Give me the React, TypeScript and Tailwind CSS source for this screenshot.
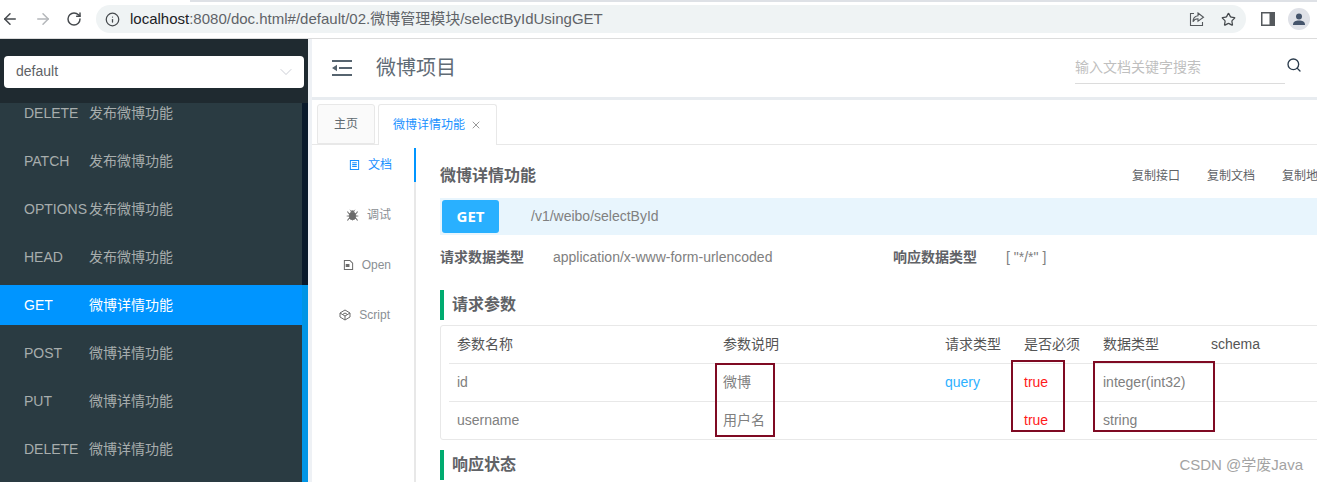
import { Search, ChevronDown, ArrowLeft, ArrowRight, RotateCw, Info, Star, Bug, X } from "lucide-react";

const FONT = "font-['Liberation_Sans','Noto_Sans_CJK_SC',sans-serif]";

const MENU = [
  { method: "DELETE", name: "发布微博功能" },
  { method: "PATCH", name: "发布微博功能" },
  { method: "OPTIONS", name: "发布微博功能" },
  { method: "HEAD", name: "发布微博功能" },
  { method: "GET", name: "微博详情功能", active: true },
  { method: "POST", name: "微博详情功能" },
  { method: "PUT", name: "微博详情功能" },
  { method: "DELETE", name: "微博详情功能" },
];

function BrowserBar() {
  return (
    <div className="relative flex h-[39px] shrink-0 items-center border-b border-[#dcdcdc] bg-white text-[#5f6368]">
      <div className="absolute right-0 top-0 h-[2px] w-[1127px] bg-[#dee1e6]" />
      <ArrowLeft className="ml-[1px] h-[18px] w-[18px] text-[#45494d]" strokeWidth={2} />
      <ArrowRight className="ml-[15px] h-[18px] w-[18px] text-[#b4b7ba]" strokeWidth={2} />
      <RotateCw className="ml-[14px] h-[16px] w-[16px] text-[#45494d]" strokeWidth={2.2} />
      <div className="ml-[14px] flex h-[28px] w-[1150px] items-center rounded-full bg-[#eff3f4] pl-[9px]">
        <Info className="h-[15px] w-[15px] text-[#45494d]" strokeWidth={2} />
        <span className="ml-[10px] text-[15px] text-[#5f6368]">
          <span className="text-[#202124]">localhost</span>:8080/doc.html#/default/02.微博管理模块/selectByIdUsingGET
        </span>
        <svg viewBox="0 0 16 16" className="ml-auto h-[16px] w-[16px] text-[#55595d]" fill="none" stroke="currentColor" strokeWidth="1.1">
          <path d="M5 2.5H1.5v12h12V11" />
          <path d="M9 2l5.5 4.2L9 10.2V7.8c-2.4 0-4 .9-5 3 0-3.4 1.8-5.6 5-6z" />
        </svg>
        <Star className="ml-[16px] mr-[10px] h-[15px] w-[15px] text-[#45494d]" strokeWidth={2} />
      </div>
      <svg viewBox="0 0 14 14" className="ml-[15px] h-[14px] w-[14px]">
        <path d="M0 0h14v14H0z" fill="#55595d" />
        <path d="M1.5 1.5h7v11h-7z" fill="#fff" />
      </svg>
      <div className="ml-[13px] flex h-[22px] w-[22px] items-center justify-center overflow-hidden rounded-full bg-[#dfe1e7]">
        <svg viewBox="0 0 22 22" className="h-[22px] w-[22px]" fill="#45546b">
          <circle cx="11" cy="8.5" r="3" />
          <path d="M5 17c0-3.5 2.5-4.5 6-4.5s6 1 6 4.5z" />
        </svg>
      </div>
    </div>
  );
}

function Sidebar() {
  return (
    <aside className="flex w-[308px] shrink-0 flex-col overflow-hidden bg-[#2a3b42]">
      <div className="z-10 flex h-[64px] shrink-0 items-center bg-[#1f2a30] px-[4px]">
        <div className="mt-[1px] flex h-[32px] w-[300px] items-center justify-between rounded-[4px] bg-white pl-[12px] pr-[8px] text-[14px] text-[#606266]">
          default
          <ChevronDown className="h-[20px] w-[20px] text-[#c0c4cc]" strokeWidth={1} />
        </div>
      </div>
      <div className="flex flex-1 overflow-hidden">
        <div className="-mt-[10px] flex-1">
          {MENU.map((item, i) => (
            <div
              key={i}
              className={`mb-[8px] flex h-[40px] items-center pl-[24px] text-[14px] ${
                item.active ? "bg-[#0095ff] text-white" : "text-[#a7adad]"
              }`}
            >
              <span className="w-[65px] shrink-0">{item.method}</span>
              <span>{item.name}</span>
            </div>
          ))}
        </div>
        <div className="flex w-[6px] shrink-0 flex-col">
          <div className="h-[182px] bg-[#0a1a2b]" />
          <div className="flex-1 bg-[#0095e6]" />
        </div>
      </div>
    </aside>
  );
}

function TopHeader() {
  return (
    <div className="flex h-[61px] shrink-0 items-center border-b-[3px] border-[#e8ecf0] pl-[20px]">
      <svg viewBox="0 0 20 16" className="h-[16px] w-[20px]" fill="#56646f">
        <path d="M0 0h20v2H0zM7 7h13v2H7zM0 14h20v2H0zM0 8l5-3.2v6.4z" />
      </svg>
      <span className="ml-[24px] text-[20px] text-[#5f6b75]">微博项目</span>
      <div className="ml-auto flex h-[31px] w-[210px] items-center border-b border-[#dcdcdc] text-[14px] text-[#bfbfbf]">
        输入文档关键字搜索
      </div>
      <Search className="mb-[6px] ml-[1px] mr-[15px] h-[16px] w-[16px] text-[#2a3b4c]" strokeWidth={2} />
    </div>
  );
}

function Tabs() {
  return (
    <div className="mt-[5px] flex h-[40px] shrink-0 items-end gap-[3px] border-b border-[#e8e8e8] pl-[5px] text-[12px]">
      <div className="flex h-[40px] w-[58px] items-center justify-center rounded-t-[3px] border border-[#e8e8e8] bg-[#fafafa] text-[#606a70]">
        主页
      </div>
      <div className="-mb-[1px] flex h-[41px] w-[119px] items-center justify-center gap-[5px] rounded-t-[3px] border border-b-0 border-[#e8e8e8] bg-white text-[#1890ff]">
        微博详情功能
        <X className="h-[12px] w-[12px] text-[#777]" strokeWidth={1.5} />
      </div>
    </div>
  );
}

function SideNav() {
  return (
    <div className="mt-[3px] w-[104px] shrink-0 border-r-[2px] border-[#e8e8e8] text-[12px] text-[#8a8f94]">
      <div className="-mr-[2px] flex h-[34px] items-center justify-end gap-[8px] border-r-[2px] border-[#0095ff] pr-[22px] text-[#1890ff]">
        <svg viewBox="0 0 12 12" className="h-[12px] w-[11px]" fill="none" stroke="currentColor" strokeWidth="1.1">
          <path d="M1.5 1h9v10h-9zM3.5 3.5h5M3.5 5.5h5M3.5 7.5h5" />
        </svg>
        文档
      </div>
      <div className="mt-[16px] flex h-[34px] items-center justify-end gap-[8px] pr-[23px]">
        <Bug className="h-[13px] w-[13px] fill-[#6b6b6b] text-[#6b6b6b]" strokeWidth={1.5} />
        调试
      </div>
      <div className="mt-[16px] flex h-[34px] items-center justify-end gap-[8px] pr-[23px]">
        <svg viewBox="0 0 12 12" className="h-[12px] w-[11px]" fill="none" stroke="#6b6b6b" strokeWidth="1.1">
          <path d="M1.5 1h6l3 3v7h-9z" />
          <path d="M3.5 5.5h3v2h-3z" fill="#6b6b6b" />
        </svg>
        Open
      </div>
      <div className="mt-[16px] flex h-[34px] items-center justify-end gap-[8px] pr-[24px]">
        <svg viewBox="0 0 12 12" className="h-[12px] w-[12px]" fill="none" stroke="#6b6b6b" strokeWidth="1">
          <path d="M6 1l5 3v4l-5 3-5-3V4zM1 4l5 3 5-3M6 7v4M3.5 5.5L6 4l2.5 1.5" />
        </svg>
        Script
      </div>
    </div>
  );
}

function SectionTitle({ title }: { title: string }) {
  return (
    <div className="flex h-[30px] items-center border-l-[4px] border-[#00ab6f] pl-[8px] text-[16px] font-bold text-[#606266]">
      {title}
    </div>
  );
}

const ROWS = [
  { name: "id", desc: "微博", kind: "query", type: "integer(int32)" },
  { name: "username", desc: "用户名", kind: "", type: "string" },
];

function ParamTable() {
  const cols = "grid grid-cols-[266px_222px_79px_79px_108px_1fr]";
  return (
    <div className="relative mt-[5px] h-[115px] w-[900px] rounded-[3px] border border-[#e8e8e8] pl-[8px] text-[14px]">
      <div className={`${cols} h-[37px] items-center pl-[8px] text-[#555]`}>
        <span>参数名称</span>
        <span>参数说明</span>
        <span>请求类型</span>
        <span>是否必须</span>
        <span>数据类型</span>
        <span>schema</span>
      </div>
      {ROWS.map((row) => (
        <div key={row.name} className={`${cols} h-[38px] items-center border-t border-[#e8e8e8] pl-[8px] text-[#808080]`}>
          <span>{row.name}</span>
          <span>{row.desc}</span>
          <span className="text-[#2db1ff]">{row.kind}</span>
          <span className="text-[#ff1a1a]">true</span>
          <span>{row.type}</span>
          <span />
        </div>
      ))}
      {/* red annotation boxes drawn over the screenshot */}
      <div className="absolute left-[274px] top-[37px] h-[74px] w-[60px] border-[2px] border-[#7f0a23]" />
      <div className="absolute left-[570px] top-[34px] h-[72px] w-[54px] border-[2px] border-[#7f0a23]" />
      <div className="absolute left-[652px] top-[35px] h-[71px] w-[122px] border-[2px] border-[#7f0a23]" />
    </div>
  );
}

function DocPane() {
  return (
    <div className="min-w-0 flex-1 overflow-hidden pl-[24px]">
      <div className="flex h-[53px] items-center justify-between pt-[8px]">
        <span className="text-[16px] font-bold text-[#606266]">微博详情功能</span>
        <div className="flex w-[185px] shrink-0 gap-[27px] whitespace-nowrap text-[12px] text-[#606266]">
          <span>复制接口</span>
          <span>复制文档</span>
          <span>复制地址</span>
        </div>
      </div>
      <div className="flex h-[37px] items-center bg-[#e8f5fd] pl-[2px]">
        <div className="flex h-[33px] w-[57px] items-center justify-center rounded-[3px] bg-[#29b0ff] font-['Open_Sans',sans-serif] text-[15px] font-bold text-white">
          GET
        </div>
        <span className="ml-[32px] text-[14px] text-[#808080]">/v1/weibo/selectById</span>
      </div>
      <div className="flex h-[44px] items-center text-[14px] text-[#808080]">
        <span className="w-[113px] font-bold text-[#606266]">请求数据类型</span>
        <span className="w-[340px]">application/x-www-form-urlencoded</span>
        <span className="w-[113px] font-bold text-[#606266]">响应数据类型</span>
        <span>[ "*/*" ]</span>
      </div>
      <div className="mt-[11px]">
        <SectionTitle title="请求参数" />
      </div>
      <ParamTable />
      <div className="mt-[10px]">
        <SectionTitle title="响应状态" />
      </div>
    </div>
  );
}

export default function App() {
  return (
    <div className={`${FONT} relative flex h-[482px] w-[1317px] flex-col overflow-hidden bg-white`}>
      <BrowserBar />
      <div className="flex min-h-0 flex-1">
        <Sidebar />
        <div className="w-[4px] shrink-0 bg-[#eef1f5]" />
        <main className="flex min-w-0 flex-1 flex-col">
          <TopHeader />
          <Tabs />
          <div className="flex min-h-0 flex-1">
            <SideNav />
            <DocPane />
          </div>
        </main>
      </div>
      <span className="absolute bottom-[6px] right-[14px] text-[15px] text-[#a3a3a3]">CSDN @学废Java</span>
    </div>
  );
}
